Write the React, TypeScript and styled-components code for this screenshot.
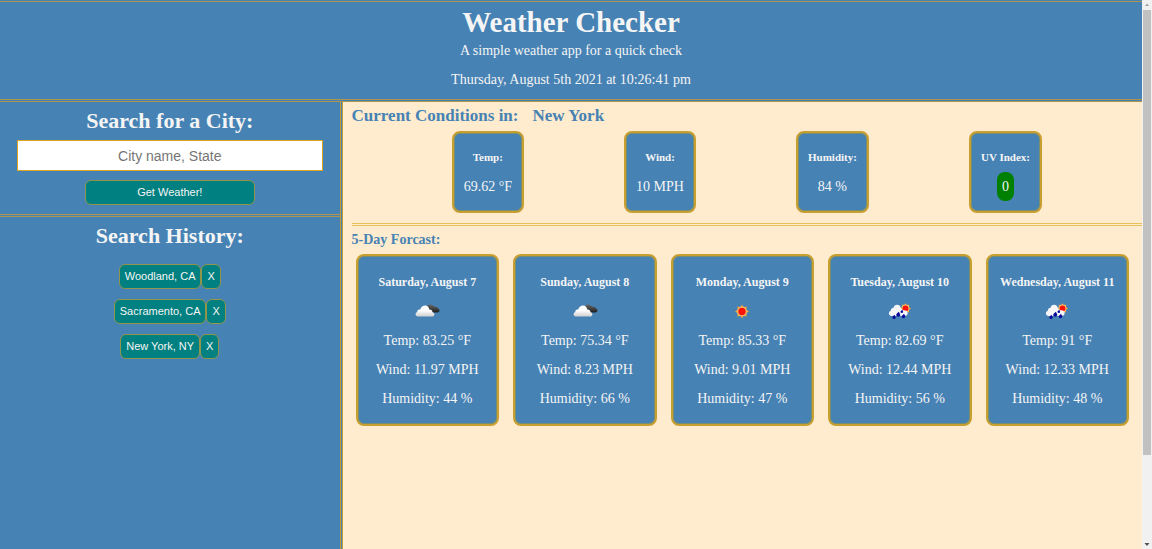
import React from "react";
import styled, { createGlobalStyle } from "styled-components";

const blue = "#4682b4";
const cream = "#ffebcd";
const gold = "#daa520";
const olive = "#ab954f";
const paleGold = "#e8c05c";

const GlobalStyle = createGlobalStyle`
  * { box-sizing: border-box; }
  body {
    margin: 0;
    background: ${cream};
    color: whitesmoke;
    font-family: "Liberation Serif", "Times New Roman", serif;
    font-size: 14px;
    line-height: 16px;
  }
  h1, h2, h3, h4, h5, p, ul { margin: 0; padding: 0; }
`;

const Shell = styled.div`
  display: grid;
  grid-template-columns: minmax(0, 1fr) 10px;
  min-height: 100vh;
`;

const Page = styled.div`
  display: flex;
  flex-direction: column;
`;

const Header = styled.header`
  padding-top: 1px;
  background: ${blue};
  border-bottom: 3px double ${olive};
  text-align: center;
`;

const HeaderInner = styled.div`
  border-top: 1px solid ${olive};
  padding: 4px 0 11px;
`;

const Title = styled.h1`
  font-size: 29px;
  line-height: 32px;
`;

const Tagline = styled.p`
  padding: 5px 0 13px;
`;

const Columns = styled.div`
  flex: 1;
  display: grid;
  grid-template-columns: 30% minmax(0, 1fr);
`;

const Sidebar = styled.aside`
  background: ${blue};
  border-right: 3px double #c69e36;
  text-align: center;
`;

const SideTitle = styled.h2`
  font-size: 22px;
  line-height: 24px;
  font-weight: bold;
`;

const SearchForm = styled.form`
  display: flex;
  flex-direction: column;
  align-items: center;
  padding: 7px 5% 9px;
  border-bottom: 3px double ${olive};
`;

const CityInput = styled.input`
  width: 100%;
  height: 31px;
  margin: 7px 0 9px;
  border: 1px solid ${gold};
  border-radius: 0;
  background: white;
  text-align: center;
  font-family: "Liberation Sans", Arial, sans-serif;
  font-size: 14px;
  &::placeholder { color: #757575; opacity: 1; }
`;

const Button = styled.button<{ $wide?: boolean }>`
  width: ${(p) => (p.$wide ? "170px" : "auto")};
  height: 25px;
  padding: 0 5px 2px;
  border: 1px solid #90954a;
  border-radius: 6px;
  background: teal;
  color: whitesmoke;
  font-family: "Liberation Sans", Arial, sans-serif;
  font-size: 11px;
  line-height: 16px;
`;

const History = styled.section`
  padding-top: 7px;
`;

const HistoryList = styled.ul`
  display: flex;
  flex-direction: column;
  gap: 10px;
  padding-top: 16px;
  list-style: none;
`;

const HistoryItem = styled.li`
  display: flex;
  justify-content: center;
`;

const Main = styled.main`
  padding: 4px 0 0 9px;
`;

const CurrentTitle = styled.h3`
  display: flex;
  gap: 14px;
  color: ${blue};
  font-size: 17px;
  line-height: 20px;
`;

const CurrentRow = styled.section`
  display: flex;
  justify-content: space-evenly;
  padding: 5px 0 10px;
  border-bottom: 3px double ${paleGold};
`;

const Card = styled.article`
  border: 2px solid #c99f30;
  border-radius: 8px;
  background: ${blue};
  box-shadow: inset 0 0 0 1px #76906f;
  text-align: center;
`;

const ConditionCard = styled(Card)`
  padding: 17px 10px 8px;
`;

const ConditionLabel = styled.h5`
  padding-bottom: 8px;
  font-size: 11px;
  line-height: 14px;
`;

const Value = styled.p`
  padding: 7px 0 8px;
`;

const UvBadge = styled.span`
  padding: 7px 5px;
  border-radius: 8px;
  background: green;
`;

const ForecastTitle = styled.h4`
  padding: 6px 0;
  color: ${blue};
  font-size: 14px;
`;

const ForecastGrid = styled.section`
  display: grid;
  grid-template-columns: repeat(5, minmax(0, 1fr));
  gap: 14px;
  padding: 0 13px 0 4px;
`;

const DayCard = styled(Card)`
  display: flex;
  flex-direction: column;
  align-items: center;
  gap: 13px;
  padding: 18px 0 17px;
`;

const DayName = styled.h5`
  font-size: 12px;
  line-height: 16px;
`;

const WeatherSvg = styled.svg`
  display: block;
  width: 28px;
  height: 17px;
  overflow: visible;
`;

const ScrollTrack = styled.div`
  display: flex;
  flex-direction: column;
  align-items: center;
  background: #f1f1f1;
`;

const ScrollArrow = styled.svg`
  flex: none;
  width: 10px;
  height: 10px;
`;

const ScrollThumb = styled.div`
  width: 8px;
  height: 81%;
  margin-bottom: auto;
  background: #c1c1c1;
`;

type Sky = "clouds" | "sun" | "rain";

const sunRays =
  "M0-7 1.5-4.2 4.7-5 4.2-1.7 7 0 4.2 1.7 4.7 5 1.5 4.2 0 7-1.5 4.2-4.7 5-4.2 1.7-7 0-4.2-1.7-4.7-5-1.5-4.2z";

function Sun({ x, y, scale = 1 }: { x: number; y: number; scale?: number }) {
  return (
    <g transform={`translate(${x} ${y}) scale(${scale})`}>
      <path d={sunRays} fill="#f5a52d" />
      <circle r="4.9" fill="#f7c074" />
      <circle r="3.7" fill="#fb1208" />
    </g>
  );
}

function Drop({ x, y, r }: { x: number; y: number; r: number }) {
  return (
    <path
      transform={`translate(${x} ${y}) scale(${r})`}
      d="M.3-1.700C.6-1 1.100-.6 1.100 0a1.100 1.100 0 0 1-2.200 0C-1.100-.6-.1-1 .3-1.700z"
      fill="#0a0a9c"
    />
  );
}

function WeatherIcon({ sky }: { sky: Sky }) {
  if (sky === "sun") {
    return (
      <WeatherSvg viewBox="0 0 28 16" role="img" aria-label="Clear">
        <Sun x={14} y={8} />
      </WeatherSvg>
    );
  }
  if (sky === "clouds") {
    return (
      <WeatherSvg viewBox="-1 0 28 16" role="img" aria-label="Cloudy">
        <defs>
          <linearGradient id="cloud" x1="0" y1="0" x2="0" y2="1">
            <stop offset="0.45" stopColor="#fff" />
            <stop offset="1" stopColor="#cfcfcf" />
          </linearGradient>
          <linearGradient id="dark" x1="0" y1="0" x2="0" y2="1">
            <stop offset="0" stopColor="#686868" />
            <stop offset="1" stopColor="#1e1e1e" />
          </linearGradient>
        </defs>
        <path
          d="M13 5C13 2 14 1 16 1c2 0 3.500 1 4.500 2.300 2-.5 3.300.5 3.500 1.700 2.200.5 2 4-.8 4H17z"
          fill="url(#dark)"
        />
        <path
          d="M4 13C1 13 .9 9.600 3.300 8.600 3 6.600 4.500 5.500 6.200 6 7 3.200 9 2 11 2c2.500 0 4 1.800 4.300 4 2-.2 3.200 1 3.200 2.700 2.700.5 2.500 4.300-.5 4.300z"
          fill="url(#cloud)"
        />
      </WeatherSvg>
    );
  }
  return (
    <WeatherSvg viewBox="0 0 28 16" role="img" aria-label="Rain">
      <Sun x={19.5} y={5} scale={0.8} />
      <path
        d="M6 12.500c-3.500.3-4.200-4-1.200-5.200C4.800 5 6 4.300 7.300 4.500 8 2 9.300 1.200 11 1.200c2.300 0 3.700 1.500 4 3.600l1.500 1.700 3 .5c2.800.5 3 4.800 0 5.200z"
        fill="#f6f6f9"
      />
      <Drop x={8} y={13.9} r={1.5} />
      <Drop x={12.2} y={11.3} r={1.8} />
      <Drop x={15.8} y={8.2} r={1.2} />
      <Drop x={17.5} y={13} r={1.6} />
    </WeatherSvg>
  );
}

const conditions = [
  { label: "Temp:", value: "69.62 °F" },
  { label: "Wind:", value: "10 MPH" },
  { label: "Humidity:", value: "84 %" },
  { label: "UV Index:", value: "0", uv: true },
];

const forecast: { day: string; sky: Sky; temp: string; wind: string; humidity: string }[] = [
  { day: "Saturday, August 7", sky: "clouds", temp: "83.25", wind: "11.97", humidity: "44" },
  { day: "Sunday, August 8", sky: "clouds", temp: "75.34", wind: "8.23", humidity: "66" },
  { day: "Monday, August 9", sky: "sun", temp: "85.33", wind: "9.01", humidity: "47" },
  { day: "Tuesday, August 10", sky: "rain", temp: "82.69", wind: "12.44", humidity: "56" },
  { day: "Wednesday, August 11", sky: "rain", temp: "91", wind: "12.33", humidity: "48" },
];

const cities = ["Woodland, CA", "Sacramento, CA", "New York, NY"];

export default function App() {
  return (
    <Shell>
      <GlobalStyle />
      <Page>
        <Header>
          <HeaderInner>
            <Title>Weather Checker</Title>
            <Tagline>A simple weather app for a quick check</Tagline>
            <p>Thursday, August 5th 2021 at 10:26:41 pm</p>
          </HeaderInner>
        </Header>
        <Columns>
          <Sidebar>
            <SearchForm onSubmit={(e) => e.preventDefault()}>
              <SideTitle>
                <label htmlFor="city">Search for a City:</label>
              </SideTitle>
              <CityInput id="city" type="text" placeholder="City name, State" />
              <Button type="submit" $wide>Get Weather!</Button>
            </SearchForm>
            <History>
              <SideTitle>Search History:</SideTitle>
              <HistoryList>
                {cities.map((city) => (
                  <HistoryItem key={city}>
                    <Button type="button">{city}</Button>
                    <Button type="button" aria-label={`Remove ${city}`}>X</Button>
                  </HistoryItem>
                ))}
              </HistoryList>
            </History>
          </Sidebar>
          <Main>
            <CurrentTitle>
              <span>Current Conditions in:</span>
              <span>New York</span>
            </CurrentTitle>
            <CurrentRow>
              {conditions.map((c) => (
                <ConditionCard key={c.label}>
                  <ConditionLabel>{c.label}</ConditionLabel>
                  <Value>{c.uv ? <UvBadge>{c.value}</UvBadge> : c.value}</Value>
                </ConditionCard>
              ))}
            </CurrentRow>
            <ForecastTitle>5-Day Forcast:</ForecastTitle>
            <ForecastGrid>
              {forecast.map((f) => (
                <DayCard key={f.day}>
                  <DayName>{f.day}</DayName>
                  <WeatherIcon sky={f.sky} />
                  <p>Temp: {f.temp} °F</p>
                  <p>Wind: {f.wind} MPH</p>
                  <p>Humidity: {f.humidity} %</p>
                </DayCard>
              ))}
            </ForecastGrid>
          </Main>
        </Columns>
      </Page>
      <ScrollTrack aria-hidden="true">
        <ScrollArrow viewBox="0 0 10 10"><path d="M5 3.500 7 6H3z" fill="#a3a3a3" /></ScrollArrow>
        <ScrollThumb />
        <ScrollArrow viewBox="0 0 10 10"><path d="M5 7 2.500 4h5z" fill="#505050" /></ScrollArrow>
      </ScrollTrack>
    </Shell>
  );
}
